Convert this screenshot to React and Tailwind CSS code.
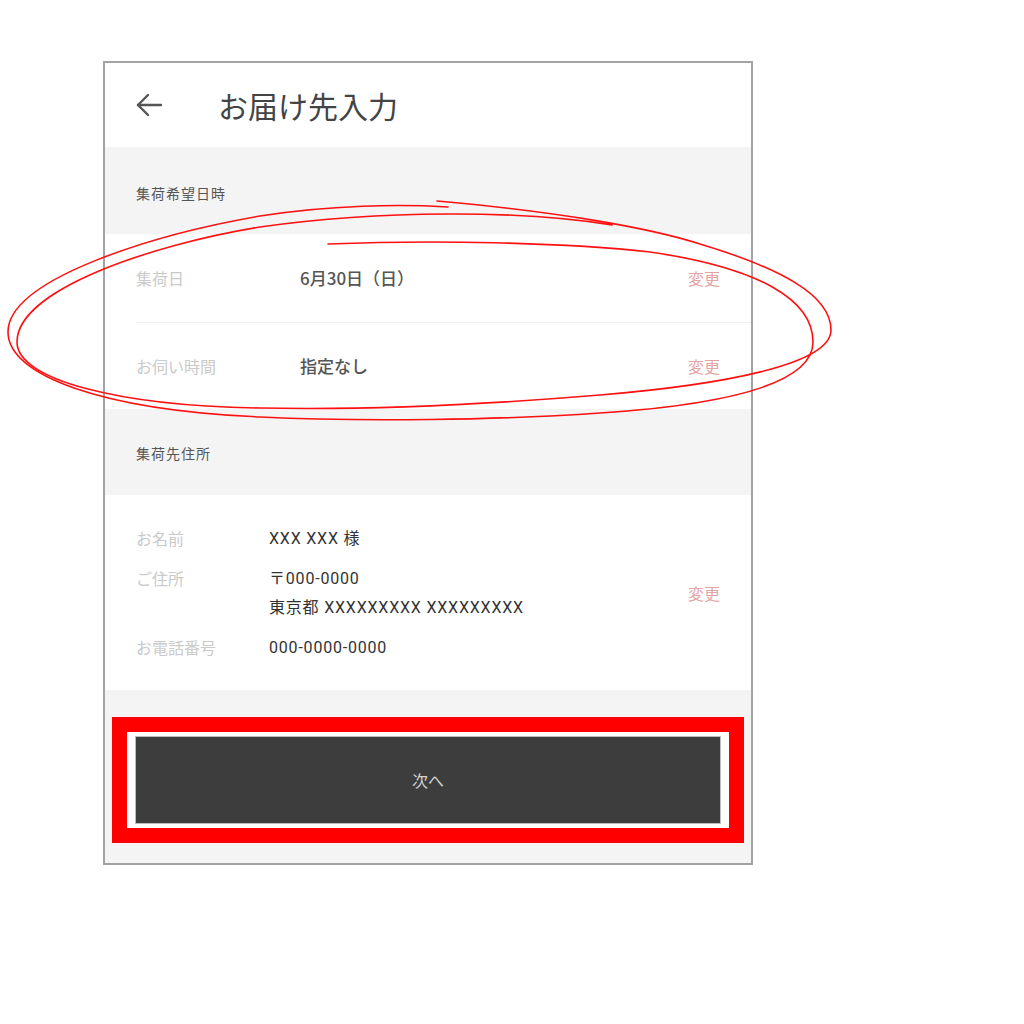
import React from "react";

const font = { fontFamily: '"Noto Sans CJK JP", "Noto Sans", sans-serif' };
const latin = { fontFamily: 'Roboto, "Noto Sans CJK JP", sans-serif' };

function BackArrow() {
  return (
    <svg width="28" height="26" viewBox="0 0 28 26" fill="none" stroke="#555" strokeWidth="2.4" strokeLinecap="round" strokeLinejoin="round">
      <path d="M26 13H3" />
      <path d="M13 3L3 13l10 10" />
    </svg>
  );
}

function Annotation() {
  return (
    <svg className="absolute left-0 top-0 pointer-events-none" width="1024" height="1024" viewBox="0 0 1024 1024" fill="none" stroke="#ff1010" strokeWidth="1.6" strokeLinecap="round">
      <path d="M437 201 C560 212 650 228 700 244 C780 268 831 295 831 330 C831 365 720 385 600 395 C480 405 360 410 260 408 C120 406 17 380 17 342 C17 290 150 245 260 227 C380 210 520 210 612 225" />
      <path d="M328 244 C430 240 560 242 650 252 C760 268 813 300 813 342 C813 385 720 405 600 413 C500 420 360 422 260 417 C100 410 8 375 8 332 C8 280 150 235 260 216 C330 205 400 204 448 207" />
    </svg>
  );
}

export default function App() {
  return (
    <div className="relative w-[1024px] h-[1024px] bg-white overflow-hidden" style={font}>
      <div className="pt-[61px] pl-[103px]">
        <div className="w-[650px] border-2 border-[#a3a3a3] flex flex-col bg-white">
          {/* Header */}
          <div className="h-[84px] flex items-center pl-[30px]">
            <BackArrow />
            <div className="ml-[55px] text-[30px] text-[#444] leading-none">お届け先入力</div>
          </div>

          {/* Section: 集荷希望日時 */}
          <div className="h-[87px] bg-[#f4f4f4] flex items-center pl-[31px] pt-[6px]">
            <span className="text-[14px] tracking-[1px] text-[#555]">集荷希望日時</span>
          </div>

          <div className="bg-white flex flex-col">
            <div className="h-[88px] flex items-center pl-[31px] pr-[31px]">
              <span className="w-[164px] text-[16px] text-[#cacaca]">集荷日</span>
              <span className="flex-1 text-[17px] font-medium text-[#555]">6月30日（日）</span>
              <span className="text-[16px] text-[#e4a5a5]">変更</span>
            </div>
            <div className="h-px bg-[#f0f0f0] ml-[31px]" />
            <div className="h-[86px] flex items-center pl-[31px] pr-[31px]">
              <span className="w-[164px] text-[16px] text-[#cacaca]">お伺い時間</span>
              <span className="flex-1 text-[17px] font-medium text-[#555]">指定なし</span>
              <span className="text-[16px] text-[#e4a5a5]">変更</span>
            </div>
          </div>

          {/* Section: 集荷先住所 */}
          <div className="h-[86px] bg-[#f4f4f4] flex items-center pl-[31px] pt-[2px]">
            <span className="text-[14px] tracking-[1px] text-[#555]">集荷先住所</span>
          </div>

          <div className="h-[195px] bg-white flex items-center pl-[31px] pr-[31px]">
            <div className="flex-1 flex flex-col gap-[11px] text-[16px] leading-[29px]">
              <div className="flex">
                <span className="w-[133px] text-[#cacaca]">お名前</span>
                <span className="text-[#333] tracking-[0.8px]" style={latin}>XXX XXX 様</span>
              </div>
              <div className="flex">
                <span className="w-[133px] text-[#cacaca]">ご住所</span>
                <div className="flex flex-col text-[#333] tracking-[0.8px]" style={latin}>
                  <span>〒000-0000</span>
                  <span>東京都 XXXXXXXXX XXXXXXXXX</span>
                </div>
              </div>
              <div className="flex">
                <span className="w-[133px] text-[#cacaca]">お電話番号</span>
                <span className="text-[#333] tracking-[0.8px]" style={latin}>000-0000-0000</span>
              </div>
            </div>
            <span className="text-[16px] text-[#e4a5a5]">変更</span>
          </div>

          {/* Button area */}
          <div className="bg-[#f4f4f4] pt-[27px] pb-[20px] px-[7px]">
            <div className="border-[15px] border-[#ff0000] bg-white px-[8px] py-[4px]">
              <div className="border border-[#bdbdbd]">
                <button className="w-full h-[86px] bg-[#3d3d3d] flex items-center justify-center text-[16px] text-[#d2d2d2]">
                  次へ
                </button>
              </div>
            </div>
          </div>
        </div>
      </div>
      <Annotation />
    </div>
  );
}
